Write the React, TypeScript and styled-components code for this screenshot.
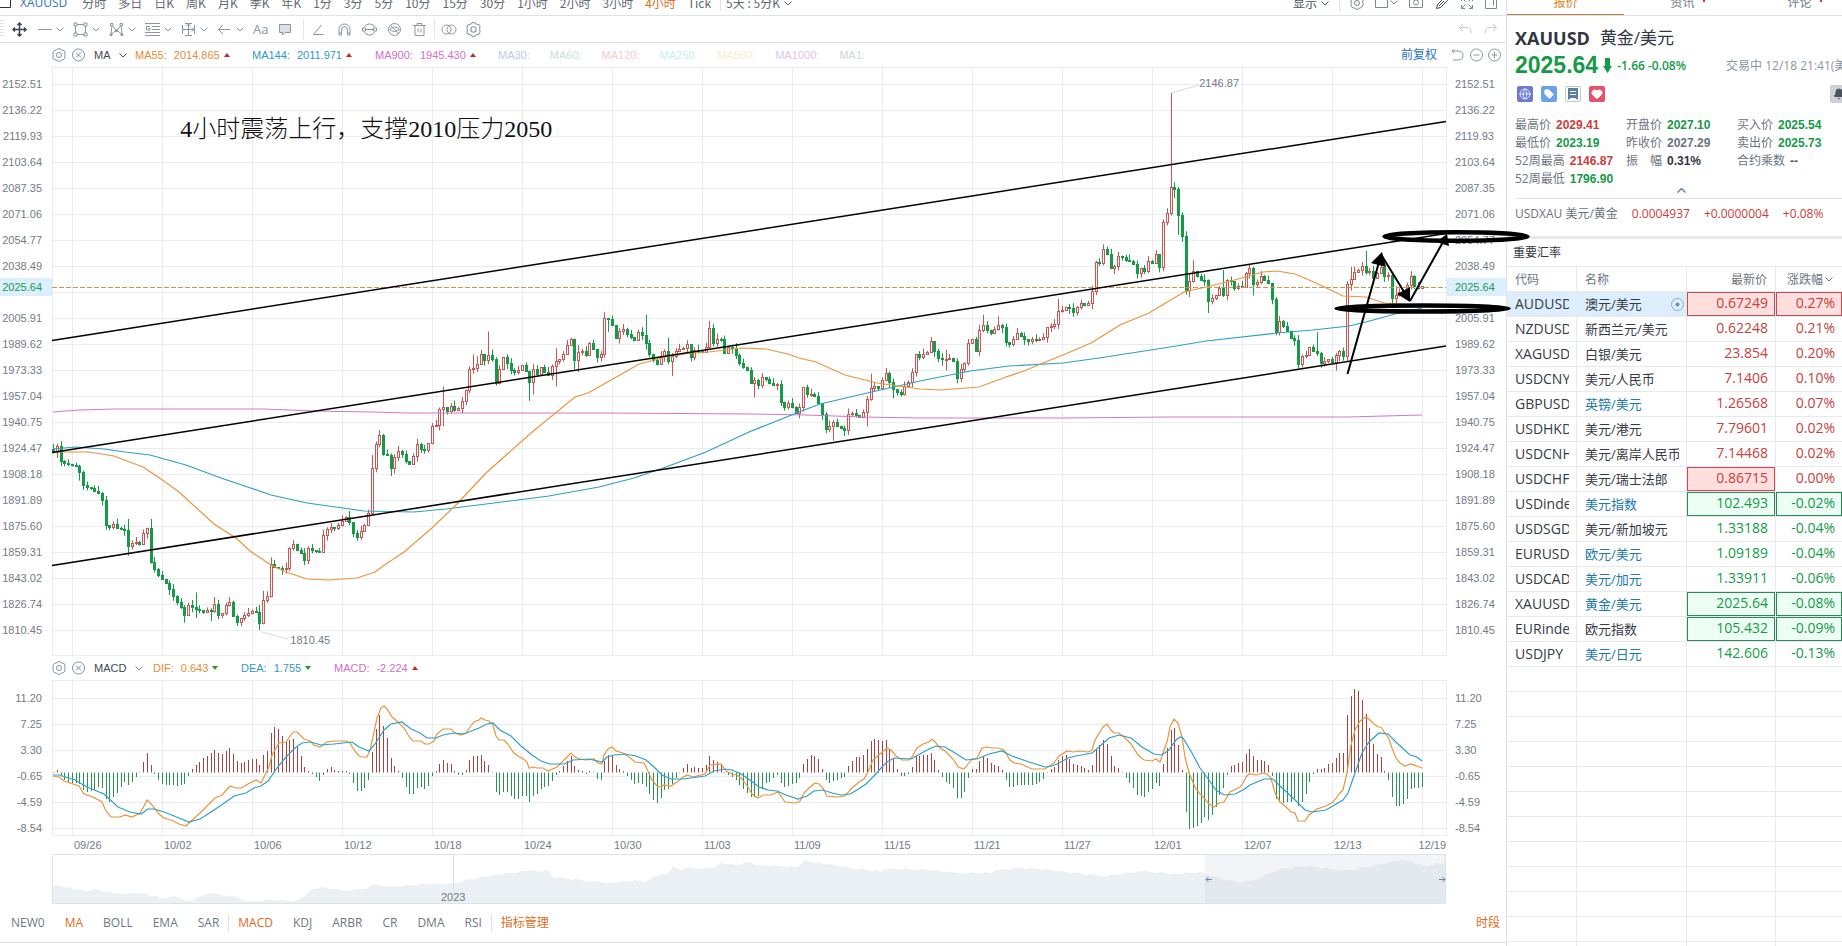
import React from "react";
import styled, { createGlobalStyle } from "styled-components";
import { Globe, Tag, Heart, Bell } from "lucide-react";

const ui = `"Open Sans", "Noto Sans CJK SC", sans-serif`;
const num = `"Liberation Sans", "Noto Sans CJK SC", sans-serif`;
const UP = "#c8403c";
const DOWN = "#159a48";
const GRID = "#e9ecf0";

const Global = createGlobalStyle`
  * { box-sizing: border-box; }
  body { margin: 0; background: #fff; font-family: ${ui}; font-size: 12px; color: #6b7480; }
  button { border: 0; background: none; padding: 0; margin: 0; font: inherit; color: inherit; cursor: pointer; }
`;

/* ---------- market data ---------- */

const closes = [
  1921.8, 1925.5, 1916, 1915, 1914.5, 1913.5, 1913, 1909.5, 1901, 1900, 1899.5, 1897.5, 1896, 1892, 1876, 1875, 1877, 1874.5, 1874, 1873,
  1863, 1865, 1865.5, 1864, 1871, 1874.5, 1853, 1848.5, 1845, 1842.5, 1840, 1836, 1831.5, 1828, 1825, 1820, 1826, 1825, 1823.5, 1823,
  1822, 1823, 1822.5, 1827, 1820, 1821, 1826, 1828, 1819.5, 1815.5, 1818, 1820, 1821, 1822.5, 1821.5, 1814.5, 1829.5, 1831.5, 1852, 1850,
  1849, 1848.5, 1849.5, 1861.5, 1864.5, 1860.5, 1858.5, 1854.5, 1862, 1860.5, 1860, 1859.5, 1870, 1874, 1875, 1874.5, 1876, 1879, 1881, 1878,
  1871.5, 1868.5, 1872.5, 1876, 1883.5, 1912, 1927, 1932.5, 1921, 1920, 1912, 1919, 1922.5, 1920.5, 1916, 1914.5, 1919.5, 1927, 1924, 1923,
  1927.5, 1938.5, 1939, 1949, 1950, 1947.5, 1951, 1948, 1949.5, 1954, 1961, 1974, 1974.5, 1977, 1983.5, 1979.5, 1983, 1980.5, 1965, 1974,
  1981.5, 1977.5, 1973.5, 1972, 1973.5, 1976.5, 1973, 1966, 1974, 1971, 1975, 1972, 1970.5, 1976, 1979, 1980, 1983.5, 1989, 1992.5, 1979.5,
  1984.5, 1985, 1983, 1990, 1986.5, 1981.5, 1983.5, 2006, 2005, 2001.5, 1993.5, 1998, 1999, 1996, 1994, 1992, 1997, 1995.5, 1990, 1983.5,
  1979.5, 1977, 1982, 1985.5, 1979, 1982, 1985.5, 1986.5, 1987, 1989.5, 1981.5, 1986, 1985, 1984.5, 1988, 1999.5, 1990, 1993, 1992.5, 1984,
  1987.5, 1987, 1983, 1978, 1975.5, 1973.5, 1965, 1967, 1964, 1969, 1967.5, 1965, 1964, 1964.5, 1953.5, 1950, 1952.5, 1950, 1946.5, 1950,
  1962.5, 1958, 1958.5, 1957, 1952.5, 1945.5, 1936.5, 1938.5, 1940.5, 1938.5, 1937, 1935.5, 1946, 1946.5, 1945, 1944, 1947, 1955, 1962, 1963,
  1962, 1967, 1971.5, 1965.5, 1961.5, 1959.5, 1958, 1963, 1966, 1972, 1983.5, 1981.5, 1983.5, 1984.5, 1991.5, 1985, 1981, 1980, 1980.5, 1981,
  1979, 1968.5, 1974, 1977.5, 1990.5, 1992.5, 1985.5, 1998.5, 2001.5, 1998.5, 1996.5, 1999, 2001.5, 2000, 1991, 1989.5, 1993, 1996.5, 1994.5, 1992.5,
  1991.5, 1992.5, 1992, 1993, 1994, 2000, 2001, 2002, 2010, 2011, 2013, 2012, 2009.5, 2012.5, 2015, 2014, 2015, 2023, 2041, 2040.5,
  2049, 2046, 2037, 2038.5, 2045, 2044, 2042.5, 2041.5, 2039.5, 2034, 2037.5, 2035.5, 2041.5, 2040.5, 2046, 2038, 2066, 2071.5, 2088, 2087,
  2070.5, 2057, 2023.5, 2029, 2035.5, 2032, 2030, 2029.5, 2016.5, 2018.5, 2020.5, 2024.5, 2020.5, 2029.5, 2029, 2025, 2026, 2025.5, 2034, 2037,
  2027, 2028.5, 2032, 2030, 2028, 2018, 1997, 2004, 2001, 1998, 1993.5, 1992, 1977, 1982, 1983, 1987.5, 1985.5, 1984, 1977.5, 1979,
  1980, 1978.5, 1982.5, 1985, 1982, 2027, 2030.5, 2035, 2036, 2038.5, 2035, 2035.5, 2031, 2034, 2038, 2032, 2033, 2018.5, 2020, 2022,
  2023.5, 2026.5, 2032, 2026, 2025, 2025.64,
];

/* index -> [high, low] where the session moved far beyond its body */
const extremes: Record<number, [number, number]> = {
  0: [1927, 1921], 7: [1914, 1904], 20: [1880, 1857], 26: [1880, 1852], 35: [1826, 1815], 38: [1834, 1818], 42: [1824, 1816],
  43: [1831, 1821], 49: [1820, 1813], 55: [1826, 1810.45], 56: [1835, 1814], 58: [1856, 1831], 79: [1885, 1876],
  85: [1920, 1883], 90: [1921, 1907], 104: [1963, 1938], 112: [1983, 1971], 113: [1982, 1972], 116: [1997.5, 1977],
  127: [1973, 1954], 128: [1977, 1958], 134: [1987, 1963], 139: [1993, 1974], 140: [1989, 1972], 147: [2009.5, 1981],
  148: [2006, 1997], 158: [2008, 1986], 164: [1993.5, 1977], 165: [1984, 1969.5], 175: [2004, 1987], 176: [2002, 1988],
  187: [1969, 1956], 208: [1942, 1929], 217: [1957, 1938], 218: [1971, 1954], 224: [1968, 1955.5], 237: [1984, 1976], 238: [1986, 1973],
  248: [2008, 1997], 252: [2007, 1998], 268: [2018, 1999], 280: [2052, 2039], 298: [2146.87, 2070], 299: [2091, 2081],
  300: [2088, 2058], 303: [2034, 2019], 304: [2042, 2028], 308: [2030, 2009], 312: [2036, 2019], 320: [2038, 2020],
  326: [2019, 1995], 337: [1997, 1982], 342: [1984, 1973], 345: [2029, 1979], 346: [2038, 2023], 350: [2048, 2033],
  357: [2034, 2014], 358: [2026, 2013],
};

const barX = (i: number) => Math.round(53 + i * 3.75) + 0.5;
const priceY = (p: number) => 84 + (2152.51 - p) * 1.5961;

const candles = closes.map((close, i) => {
  const open = i ? closes[i - 1] : 1924;
  const hi = Math.max(open, close) + ((i * 7) % 5) * 0.8;
  const lo = Math.min(open, close) - ((i * 11) % 6) * 0.7;
  const [high, low] = extremes[i] ?? [hi, lo];
  return { open, close, high, low };
});

/* MACD histogram, one value per session, in twentieths of a point */
const histogram = [
  0, 7, -8, -23, -27, -30, -31, -33, -53, -58, -55, -53, -43, -46, -78, -88, -73, -62, -43, -28,
  -36, -28, -13, 2, 32, 60, 22, -5, -23, -33, -37, -38, -38, -41, -38, -35, -9, 10, 24, 33,
  43, 51, 58, 69, 60, 57, 66, 75, 57, 35, 30, 33, 37, 42, 42, 22, 52, 65, 120, 138,
  131, 111, 95, 99, 101, 77, 49, 17, 5, -4, -13, -25, -7, 10, 16, 9, 5, 5, 6, -3,
  -31, -56, -56, -46, -23, 62, 132, 172, 141, 103, 45, 20, 5, -16, -43, -65, -65, -46, -44, -50,
  -40, -10, 5, 27, 39, 30, 25, 5, -8, -7, 7, 37, 49, 49, 54, 36, 22, 0, -58, -67,
  -57, -58, -70, -80, -79, -70, -71, -89, -70, -63, -48, -42, -41, -25, -8, 5, 19, 35, 49, 19,
  9, 5, -5, 6, 0, -20, -23, 34, 54, 51, 22, 12, 5, -11, -21, -35, -30, -33, -44, -65,
  -83, -92, -76, -53, -50, -35, -17, 0, 13, 27, 13, 17, 13, 14, 22, 51, 39, 33, 27, 0,
  -8, -13, -23, -38, -49, -60, -74, -73, -71, -48, -32, -27, -17, -7, -31, -43, -39, -34, -32, -17,
  27, 42, 54, 51, 42, 12, -23, -32, -25, -22, -16, -13, 19, 35, 46, 46, 52, 72, 95, 102,
  98, 95, 97, 71, 42, 12, -11, -11, -5, 17, 49, 49, 54, 52, 58, 37, 9, -13, -28, -34,
  -47, -76, -76, -59, -17, 10, 12, 36, 50, 45, 30, 24, 20, 9, -23, -44, -44, -38, -38, -38,
  -38, -38, -35, -29, -20, 0, 12, 17, 39, 49, 52, 42, 27, 24, 21, 15, 9, 22, 70, 82,
  99, 87, 49, 19, 15, 0, -17, -31, -46, -68, -70, -74, -59, -48, -31, -40, 27, 73, 127, 135,
  84, 9, -119, -169, -166, -160, -151, -133, -142, -127, -103, -67, -46, -8, 21, 24, 29, 33, 55, 70,
  51, 39, 39, 34, 24, -11, -80, -89, -92, -89, -89, -77, -100, -89, -64, -28, -5, 12, 10, 15,
  25, 30, 45, 60, 60, 174, 231, 252, 244, 219, 177, 134, 87, 55, 46, 6, -22, -74, -100, -100,
  -94, -79, -49, -46, -46, -44,
];

const dif =
  "53,776 59,777 64,781 79,786 84,794 93,797 102,802 106,811 111,817 120,817 125,815 132,817 140,813 144,806 147,800 152,805 159,814 164,818 171,820 179,824 186,826 191,821 200,813 207,806 215,798 222,795 230,786 236,788 241,788 248,784 256,780 261,783 264,777 269,767 272,755 279,743 286,742 293,732 297,732 304,739 310,741 314,745 320,747 327,742 334,741 346,741 350,743 354,750 359,756 362,757 367,757 370,750 373,737 377,718 381,708 384,706 387,709 392,717 398,722 404,728 410,738 413,741 421,741 425,744 429,744 434,741 437,734 443,729 451,729 455,733 461,735 466,733 470,727 474,722 479,720 481,718 485,720 489,721 493,725 496,736 499,740 504,740 507,743 514,753 518,756 522,758 527,762 529,768 534,767 537,768 543,768 548,771 557,767 566,758 571,753 575,757 580,759 586,760 594,759 598,763 602,764 604,755 608,749 612,747 616,751 623,753 629,757 635,762 644,763 647,769 652,780 657,786 661,787 664,785 671,786 677,782 682,778 687,775 693,777 705,774 710,765 721,764 726,771 732,774 737,775 741,778 746,784 752,794 758,798 763,795 771,795 778,792 785,802 796,803 800,801 804,793 809,788 815,783 819,784 823,788 827,796 837,797 845,796 852,788 859,782 864,779 868,772 873,760 880,754 887,748 891,750 896,756 902,760 909,760 912,757 917,748 923,744 929,742 932,739 936,743 939,747 945,751 949,755 954,760 958,767 964,769 968,764 972,759 977,758 982,748 987,747 992,748 998,748 1004,750 1010,760 1014,763 1021,764 1032,769 1045,769 1054,763 1059,756 1067,751 1073,752 1080,751 1088,752 1092,750 1095,740 1103,727 1107,724 1111,730 1114,733 1119,733 1125,738 1131,744 1138,755 1144,760 1152,761 1156,759 1160,762 1163,753 1167,742 1170,727 1174,719 1178,723 1182,737 1185,757 1189,773 1195,787 1200,794 1205,799 1209,804 1214,807 1219,803 1224,802 1230,792 1240,787 1243,783 1246,777 1249,774 1257,775 1262,773 1267,774 1271,778 1275,793 1280,802 1286,807 1291,812 1295,813 1298,821 1305,821 1309,815 1317,809 1326,806 1333,802 1340,793 1343,790 1347,773 1351,745 1355,730 1360,721 1366,717 1369,719 1374,724 1378,727 1381,727 1385,733 1389,739 1392,748 1396,758 1400,763 1405,766 1411,764 1422,768";
const dea =
  "53,775 59,775 75,780 87,787 104,794 118,807 130,812 141,814 148,809 154,809 164,812 179,818 189,822 200,819 211,812 223,804 234,796 246,793 254,788 261,786 268,781 277,768 286,757 295,748 302,743 311,742 321,745 334,744 352,742 359,747 369,751 375,744 384,730 391,724 402,722 411,729 420,733 427,738 436,738 443,735 454,733 464,734 479,728 487,724 493,723 500,730 511,736 521,746 532,755 541,761 550,764 564,764 573,760 589,759 602,762 607,757 614,755 625,754 636,756 646,760 654,767 662,775 671,779 684,779 705,776 714,771 725,769 732,770 741,774 750,780 759,787 768,790 777,791 786,795 798,799 807,796 814,791 823,790 832,793 841,795 850,794 857,790 866,784 873,777 882,767 887,762 894,758 911,759 920,754 929,749 936,746 945,747 955,753 966,760 977,759 989,754 1002,751 1012,756 1029,762 1045,767 1052,766 1057,764 1068,758 1076,756 1092,753 1099,747 1109,738 1119,735 1131,738 1142,747 1154,754 1162,755 1169,750 1176,740 1180,737 1183,738 1192,753 1200,768 1209,780 1216,790 1224,795 1235,794 1243,790 1250,785 1264,779 1273,779 1280,786 1293,798 1305,810 1312,812 1326,810 1343,800 1348,793 1355,773 1362,753 1369,742 1379,733 1388,734 1398,744 1410,755 1417,757 1422,761";

const ma55 =
  "53,452 89,452 114,456 143,467 161,479 179,492 214,524 236,538 250,551 271,565 286,572 307,579 329,580 357,578 375,572 386,564 404,552 432,528 457,504 486,473 531,433 575,397 588,393 620,375 639,364 666,357 691,353 709,352 741,348 766,349 788,354 799,358 816,362 845,375 877,383 920,389 941,390 979,387 1006,377 1024,371 1043,363 1063,355 1091,343 1120,325 1149,313 1184,292 1206,287 1231,281 1263,272 1277,271 1295,274 1316,283 1343,296 1366,297 1384,303 1422,305";
const ma144 =
  "53,449 75,447 104,449 125,452 150,455 186,465 221,478 271,495 307,503 343,508 364,511 414,512 446,509 486,504 518,500 549,496 599,487 634,478 666,467 706,452 749,432 799,412 820,404 863,394 920,381 970,371 1009,366 1063,363 1099,358 1170,347 1206,341 1277,333 1313,330 1349,326 1366,322 1395,314 1422,308";
const ma900 =
  "53,412 80,410 114,409 264,409 314,411 371,412 407,413 609,413 752,414 806,415 863,417 920,418 1063,418 1170,417 1302,417 1349,417 1384,416 1422,415";

const history: [number, number][] = [
  [52, 886], [61, 886], [71, 888], [86, 891], [96, 889], [107, 892], [118, 894], [143, 893], [161, 898], [175, 897], [189, 901], [200, 897],
  [209, 893], [221, 895], [232, 896], [250, 902], [268, 900], [296, 901], [304, 896], [314, 888], [329, 888], [343, 891], [364, 889], [375, 885],
  [393, 887], [411, 885], [429, 884], [450, 884], [468, 880], [493, 875], [511, 873], [527, 871], [548, 871], [554, 877], [589, 881], [611, 883],
  [637, 880], [645, 883], [654, 876], [668, 874], [673, 867], [682, 870], [691, 867], [700, 869], [714, 867], [721, 863], [736, 865], [747, 862],
  [757, 865], [796, 867], [805, 861], [821, 863], [839, 866], [857, 869], [879, 871], [893, 869], [929, 870], [961, 873], [989, 873], [1000, 870],
  [1018, 868], [1042, 869], [1066, 872], [1104, 876], [1142, 871], [1173, 874], [1200, 872], [1218, 878], [1242, 883], [1259, 878], [1280, 869],
  [1307, 866], [1345, 871], [1369, 867], [1390, 862], [1404, 859], [1414, 863], [1428, 867], [1436, 863], [1446, 863],
];

const historyOutline = (() => {
  const pts: string[] = [];
  for (let k = 0; k < history.length - 1; k++) {
    const [x0, y0] = history[k];
    const [x1, y1] = history[k + 1];
    for (let x = x0; x < x1; x += 3) {
      const y = y0 + ((y1 - y0) * (x - x0)) / (x1 - x0) + (((x * 7) % 5) - 2) * 0.4;
      pts.push(`${x},${y.toFixed(1)}`);
    }
  }
  return `52,904 ${pts.join(" ")} 1446,863 1446,904`;
})();

const priceTicks = [
  "2152.51", "2136.22", "2119.93", "2103.64", "2087.35", "2071.06", "2054.77", "2038.49", "", "2005.91", "1989.62",
  "1973.33", "1957.04", "1940.75", "1924.47", "1908.18", "1891.89", "1875.60", "1859.31", "1843.02", "1826.74", "1810.45",
];
const macdTicks = ["11.20", "7.25", "3.30", "-0.65", "-4.59", "-8.54"];
const dates = [
  "09/26", "10/02", "10/06", "10/12", "10/18", "10/24", "10/30", "11/03", "11/09", "11/15", "11/21", "11/27", "12/01", "12/07", "12/13", "12/19",
];
const columns = dates.map((_, i) => 72.5 + i * 90);

type Box = "none" | "price" | "both";
const quotes: [string, string, string, string, boolean, Box][] = [
  ["AUDUSD", "澳元/美元", "0.67249", "0.27%", false, "both"],
  ["NZDUSD", "新西兰元/美元", "0.62248", "0.21%", false, "none"],
  ["XAGUSD", "白银/美元", "23.854", "0.20%", false, "none"],
  ["USDCNY", "美元/人民币", "7.1406", "0.10%", false, "none"],
  ["GBPUSD", "英镑/美元", "1.26568", "0.07%", true, "none"],
  ["USDHKD", "美元/港元", "7.79601", "0.02%", false, "none"],
  ["USDCNH", "美元/离岸人民币", "7.14468", "0.02%", false, "none"],
  ["USDCHF", "美元/瑞士法郎", "0.86715", "0.00%", false, "price"],
  ["USDindex", "美元指数", "102.493", "-0.02%", true, "both"],
  ["USDSGD", "美元/新加坡元", "1.33188", "-0.04%", false, "none"],
  ["EURUSD", "欧元/美元", "1.09189", "-0.04%", true, "none"],
  ["USDCAD", "美元/加元", "1.33911", "-0.06%", true, "none"],
  ["XAUUSD", "黄金/美元", "2025.64", "-0.08%", true, "both"],
  ["EURindex", "欧元指数", "105.432", "-0.09%", false, "both"],
  ["USDJPY", "美元/日元", "142.606", "-0.13%", true, "none"],
];

/* ---------- layout ---------- */

const Page = styled.div`
  display: flex;
  height: 100vh;
  overflow: hidden;
`;
const ChartPanel = styled.main`
  flex: 1;
  min-width: 0;
  display: flex;
  flex-direction: column;
`;
const PeriodBar = styled.nav`
  display: flex;
  align-items: flex-end;
  height: 16px;
  padding: 0 8px 4px 0;
  gap: 12px;
  overflow: hidden;
  border-bottom: 1px solid #dfe2e7;
  font-family: "Noto Sans CJK SC", sans-serif;
  white-space: nowrap;
`;
const SymbolGroup = styled.div`
  display: flex;
  align-items: center;
  gap: 8px;
  margin-right: 3px;
`;
const RangeGroup = styled(SymbolGroup)`
  gap: 5px;
  margin-left: -3px;
`;
const PeriodButton = styled.button<{ $tone?: string }>`
  display: flex;
  align-items: center;
  gap: 4px;
  height: 16px;
  line-height: 16px;
  color: ${(p) => p.$tone ?? "#5f6873"};
`;
const SymbolButton = styled(PeriodButton)`
  font-family: ${ui};
`;
const Spacer = styled.div`
  flex: 1;
`;
const BarDivider = styled.span`
  width: 1px;
  height: 16px;
  background: #dfe3e8;
`;
const PeriodTools = styled.div`
  display: flex;
  align-items: center;
  gap: 10px;
  height: 16px;
  color: #7d8690;
`;
const ToolBar = styled.div`
  display: flex;
  align-items: center;
  height: 27px;
  padding: 0 3px 0 0;
  border-bottom: 1px solid #dfe2e7;
  color: #8c96a3;
`;
const Grip = styled.span`
  width: 4px;
  height: 18px;
  margin-right: 8px;
  background: repeating-linear-gradient(#dde1e6 0 1px, #fff 1px 3px);
`;
const ToolButton = styled.button<{ $wide?: boolean; $dark?: boolean; $centered?: boolean }>`
  display: flex;
  align-items: center;
  justify-content: ${(p) => (p.$centered ? "center" : "flex-start")};
  gap: ${(p) => (p.$wide ? 4 : 0)}px;
  width: ${(p) => (p.$wide ? 36 : 25)}px;
  height: 20px;
  color: ${(p) => (p.$dark ? "#3a4350" : "inherit")};
  font-size: 13px;
`;
const ToolDivider = styled.span<{ $tight?: boolean }>`
  width: 1px;
  height: 20px;
  margin-right: ${(p) => (p.$tight ? 6 : 8)}px;
  margin-left: ${(p) => (p.$tight ? -3 : 0)}px;
  background: #e3e6ea;
`;
const Legend = styled.div`
  display: flex;
  align-items: center;
  height: 24px;
  padding: 0 4px 0 52px;
  font: 11px/24px ${num};
  white-space: nowrap;
`;
const LegendHead = styled.div`
  display: flex;
  align-items: center;
  gap: 8px;
  width: 83px;
  color: #414954;
`;
const LegendIcons = styled.div`
  display: flex;
  align-items: center;
  gap: 5px;
  color: #7b90aa;
`;
const Series = styled.span<{ $color: string; $w?: number }>`
  display: flex;
  align-items: center;
  gap: 7px;
  color: ${(p) => p.$color};
  min-width: ${(p) => p.$w ?? 0}px;
  padding-right: ${(p) => (p.$w ? 0 : 20)}px;
`;
const Mark = styled.i<{ $down?: boolean }>`
  margin-left: -3px;
  border: 3px solid transparent;
  border-top: ${(p) => (p.$down ? "4px solid #2b9a1a" : "0")};
  border-bottom: ${(p) => (p.$down ? "0" : "4px solid #c02a26")};
`;
const LegendTools = styled.div`
  display: flex;
  align-items: center;
  gap: 3px;
  color: #8c96a3;
`;
const AdjustLink = styled.a`
  margin-right: 10px;
  color: #2a6fc4;
  font: 12px/24px ${ui};
  text-decoration: none;
`;
const PlotRow = styled.div`
  display: grid;
  grid-template-columns: 52px 1fr 60px;
`;
const Axis = styled.div<{ $right?: boolean; $top: number; $height: number }>`
  position: relative;
  display: flex;
  flex-direction: column;
  height: ${(p) => p.$height}px;
  padding-top: ${(p) => p.$top}px;
  padding-left: ${(p) => (p.$right ? 9 : 0)}px;
  padding-right: ${(p) => (p.$right ? 0 : 10)}px;
  text-align: ${(p) => (p.$right ? "left" : "right")};
  font: 11px/26px ${num};
  color: #727b87;
`;
const Tick = styled.span`
  flex: 0 0 26px;
`;
const PriceTag = styled.span<{ $right?: boolean }>`
  position: absolute;
  left: 0;
  right: 0;
  top: 211px;
  height: 18px;
  padding: ${(p) => (p.$right ? "0 0 0 9px" : "0 10px 0 0")};
  background: #dceffc;
  color: #239a55;
  line-height: 18px;
`;
const Plot = styled.div`
  position: relative;
  min-width: 0;
`;
const Svg = styled.svg`
  display: block;
  width: 100%;
  overflow: visible;
`;
const Markup = styled(Svg)`
  position: absolute;
  inset: 0;
  z-index: 3;
  pointer-events: none;
`;
const Note = styled.span<{ $x: number; $y: number }>`
  position: absolute;
  left: ${(p) => p.$x}%;
  top: ${(p) => p.$y}px;
  font: 11px/14px ${num};
  color: #727b87;
`;
const Headline = styled(Note)`
  font: 24px/32px "Liberation Serif", "Noto Sans CJK SC", serif;
  font-weight: 300;
  color: #111;
  white-space: nowrap;
`;
const DateRow = styled.div`
  display: grid;
  grid-template-columns: minmax(0, 22fr) repeat(15, minmax(0, 90fr)) minmax(0, 22fr);
  height: 18px;
  margin: 0 60px 0 52px;
  font: 11px/18px ${num};
  color: #727b87;
  span:last-child { justify-self: end; }
`;
const IndicatorBar = styled.nav`
  display: flex;
  align-items: center;
  gap: 20px;
  height: 39px;
  padding: 0 6px 0 11px;
  border-bottom: 1px solid #dfe2e7;
`;
const Indicator = styled.button<{ $on?: boolean }>`
  line-height: 20px;
  color: ${(p) => (p.$on ? "#e06c1c" : "#6f7985")};
`;
const IndicatorDivider = styled.span`
  width: 1px;
  height: 18px;
  margin: 0 -11px;
  background: #dfe3e8;
`;

const Sidebar = styled.aside`
  flex: 0 0 336px;
  overflow: hidden;
  border-left: 1px solid #dfe2e7;
`;
const SideTabs = styled.nav`
  display: flex;
  width: 351px;
  height: 16px;
  overflow: hidden;
  border-bottom: 1px solid #dfe2e7;
`;
const SideTab = styled.button<{ $on?: boolean }>`
  display: flex;
  align-items: flex-end;
  justify-content: center;
  width: 117px;
  height: 16px;
  padding-bottom: ${(p) => (p.$on ? 3 : 5)}px;
  line-height: 16px;
  color: ${(p) => (p.$on ? "#d98324" : "#6f7985")};
  border-bottom: ${(p) => (p.$on ? "2px solid #c9803a" : "0")};
`;
const Dot = styled.i`
  align-self: flex-start;
  width: 2px;
  height: 2px;
  margin: 0 -10px 0 8px;
  background: #d43c3c;
`;
const Quote = styled.section`
  position: relative;
  width: 351px;
  padding: 9px 0 0 8px;
  white-space: nowrap;
`;
const Title = styled.h1`
  display: flex;
  gap: 10px;
  margin: 0;
  height: 27px;
  font: 700 18px/26px ${ui};
  color: #2f3742;
`;
const TitleName = styled.span`
  font-size: 17px;
  font-weight: 400;
`;
const PriceLine = styled.div`
  display: flex;
  align-items: center;
  gap: 5px;
  height: 26px;
  color: ${DOWN};
  font-weight: 600;
`;
const DownArrow = styled.svg`
  flex: none;
`;
const BigPrice = styled.strong`
  font: 700 23px/26px ${num};
`;
const Session = styled.span`
  margin-left: 35px;
  color: #8b95a1;
  font-weight: 400;
`;
const Badges = styled.div`
  display: flex;
  gap: 8px;
  padding: 8px 0 0 2px;
  height: 38px;
`;
const Badge = styled.button<{ $bg: string; $fg?: string; $line?: string }>`
  display: flex;
  align-items: center;
  justify-content: center;
  width: 16px;
  height: 16px;
  border: 1px solid ${(p) => p.$line ?? p.$bg};
  border-radius: 2px;
  background: ${(p) => p.$bg};
  color: ${(p) => p.$fg ?? "#fff"};
`;
const AlarmButton = styled(Badge)`
  position: absolute;
  right: 10px;
  top: 69px;
  width: 18px;
  height: 18px;
`;
const Stats = styled.dl`
  display: grid;
  grid-template-columns: 111px 111px 1fr;
  grid-auto-rows: 18px;
  margin: 0;
`;
const Stat = styled.div`
  display: flex;
  gap: 5px;
  line-height: 18px;
`;
const StatLabel = styled.dt`
  white-space: pre;
`;
const StatValue = styled.dd<{ $tone: string }>`
  margin: 0;
  font: 700 12px/18px ${num};
  color: ${(p) => p.$tone};
`;
const Collapse = styled.button`
  display: flex;
  justify-content: center;
  width: 332px;
  height: 11px;
  color: #6b87a5;
  border-bottom: 1px solid #dfe2e7;
`;
const Inverse = styled.div`
  display: flex;
  gap: 14px;
  height: 37px;
  line-height: 30px;
  color: ${UP};
`;
const InverseName = styled.span`
  color: #6b7480;
`;
const GroupTitle = styled.h2`
  margin: 0;
  height: 30px;
  padding-left: 6px;
  border-top: 3px solid #e6e9ee;
  font: 400 12px/28px ${ui};
  color: #2f3742;
`;
const Table = styled.table`
  width: 336px;
  table-layout: fixed;
  border-collapse: separate;
  border-spacing: 0;
  border-top: 1px solid #e3e6ea;
`;
const Th = styled.th<{ $end?: boolean }>`
  height: 25px;
  padding: 0 8px;
  border-right: 1px solid #e6e9ee;
  border-bottom: 1px solid #e6e9ee;
  text-align: ${(p) => (p.$end ? "right" : "left")};
  font-weight: 400;
  white-space: nowrap;
`;
const SortButton = styled.button`
  display: flex;
  align-items: center;
  gap: 2px;
  margin-left: 3px;
`;
const Row = styled.tr<{ $active?: boolean }>`
  background: ${(p) => (p.$active ? "#deedfb" : "#fff")};
`;
const Td = styled.td`
  height: 25px;
  padding: 0 7px 0 8px;
  overflow: hidden;
  border-right: 1px solid #e6e9ee;
  border-bottom: 1px solid #e6e9ee;
  color: #3b4450;
  font-size: 14px;
  line-height: 24px;
  white-space: nowrap;
`;
const NameTd = styled(Td)`
  padding-right: 2px;
  font-size: 13px;
`;
const Clip = styled.div<{ $link?: boolean; $w?: number }>`
  display: flex;
  align-items: center;
  justify-content: space-between;
  width: ${(p) => (p.$w ? `${p.$w}px` : "auto")};
  overflow: hidden;
  color: ${(p) => (p.$link ? "#2077ad" : "#333b46")};
`;
const ValueTd = styled(Td)<{ $down: boolean; $boxed: boolean }>`
  line-height: 22px;
  padding-bottom: 2px;
  text-align: right;
  color: ${(p) => (p.$down ? DOWN : UP)};
  background: ${(p) => (p.$boxed ? (p.$down ? "#edfff4" : "#ffdede") : "#fff")};
  box-shadow: ${(p) => (p.$boxed ? `inset 0 0 0 1px ${p.$down ? "#2a8a57" : "#c44c50"}` : "none")};
`;

/* ---------- icons ---------- */

type IconProps = { w?: number; h?: number; children: React.ReactNode };
const Icon = ({ w = 15, h = 15, children }: IconProps) => (
  <svg width={w} height={h} viewBox={`0 0 ${w} ${h}`} fill="none" stroke="currentColor" strokeWidth="1" aria-hidden="true">
    {children}
  </svg>
);
const Chevron = () => (
  <Icon w={8} h={5}>
    <path d="M.5.5 4 4 7.5.5" />
  </Icon>
);
const Gear = ({ size = 14 }: { size?: number }) => (
  <svg width={size} height={size} viewBox="0 0 14 14" fill="none" stroke="currentColor" aria-hidden="true">
    <path d="M5.200 1.300Q7-.3 8.800 1.300 9.800 2.400 11.200 2.300 13.400 2.700 13 4.900 12.400 6.200 13 7.800 13.500 11 11.200 11.700 9.800 11.600 8.800 12.700 7 14.300 5.200 12.700 4.200 11.600 2.800 11.700.6 11 1 9.100 1.600 7.500 1 6.200.5 3 2.800 2.300 4.200 2.400 5.200 1.300Z" />
    <circle cx="7" cy="7" r="2.500" />
  </svg>
);
const CircleMark = ({ d }: { d: string }) => (
  <Icon w={15} h={14}>
    <circle cx="7.500" cy="7" r="6" />
    <path d={d} />
  </Icon>
);

const tools: { label: string; menu?: boolean; dark?: boolean; art: React.ReactNode }[] = [
  {
    label: "移动", dark: true,
    art: <Icon><path strokeWidth="1.500" d="M7.500 1v13M1 7.500h13M5.500 3l2-2 2 2M5.500 12l2 2 2-2M3 5.500l-2 2 2 2M12 5.500l2 2-2 2" /></Icon>,
  },
  { label: "直线", menu: true, art: <Icon><path d="M1 7.500h14" /></Icon> },
  { label: "矩形", menu: true, art: <Icon><path d="M4 2.500h7M12.500 4v7M11 12.500H4M2.500 11V4M1 1h3v3H1zM11 11h3v3h-3zM1 11h3v3H1zM11 1h3v3h-3z" /></Icon> },
  { label: "形态", menu: true, art: <Icon><path d="M2 12.500 3 3l4.500 6L12 3l1 9.500L7.500 8zM1.500 1.500h2.500v2H1.500zM11 1.500h2.500v2H11zM1 12h2v1.500H1zM12 12h2v1.500h-2zM6.500 8h2v1.500h-2z" /></Icon> },
  { label: "斐波那契", menu: true, art: <Icon><path d="M0 1.500h15M0 13.500h15M7 4.500h8M7 7.500h8M0 10.500h15M5 4.500H1.500v3.500H5V6.500H3.500" /></Icon> },
  { label: "测量", menu: true, art: <Icon><path d="M1.500 3v9M13.500 3v9M1.500 7.500h12M7.500 1v13M4 1.500h7M4 13.500h7M5.500 4l2-2 2 2M11 5.500l2 2-2 2" /></Icon> },
  { label: "箭头", menu: true, art: <Icon><path d="M1.500 7.500h12M6 3 1.500 7.500 6 12" /></Icon> },
  { label: "文字", art: <span>Aa</span> },
  { label: "批注", art: <Icon><path fill="#dde1e6" d="M1.500 2.500h11v8H7l-2.500 2.500v-2.500h-3z" /></Icon> },
];
const tools2: { label: string; art: React.ReactNode }[] = [
  { label: "角度", art: <Icon><path d="M9.500 3 1.500 12.500h10" /></Icon> },
  { label: "磁吸", art: <Icon><path d="M2 13V7.500a5.500 5.500 0 0 1 11 0V13h-2.500V7.500a3 3 0 0 0-6 0V13zM2 11h2.500M10.500 11H13" /></Icon> },
  { label: "重置", art: <Icon><path d="M2 5.500a6 6 0 0 1 11 0M13 9.500a6 6 0 0 1-11 0M3.500 7.500h8M.5 6h3v3h-3zM11.500 6h3v3h-3z" /></Icon> },
  { label: "隐藏", art: <Icon><circle cx="7.500" cy="7.500" r="6" /><path d="M2.500 7.500q5-5 10 0-5 4-10 0M3 3l9 9" /></Icon> },
  { label: "删除", art: <Icon><path d="M1 3.500h13M5 3.500v-2h5v2M3 3.500v10h9v-10M6 6.500v4M9 6.500v4" /></Icon> },
];

/* ---------- page parts ---------- */

const periods = ["分时", "多日", "日K", "周K", "月K", "季K", "年K", "1分", "3分", "5分", "10分", "15分", "30分", "1小时", "2小时", "3小时"];

const SeriesValue = ({ name, value, color, w, down }: { name: string; value: string; color: string; w: number; down?: boolean }) => (
  <Series $color={color} $w={w}>
    {name} <span>{value}</span>
    <Mark $down={down} />
  </Series>
);

const Candles = () => (
  <g>
    {candles.map((c, i) => {
      const up = c.close > c.open;
      const x = barX(i);
      const top = Math.round(priceY(Math.max(c.open, c.close)));
      const h = Math.max(1, Math.round(priceY(Math.min(c.open, c.close))) - top);
      const color = up ? "#cb5550" : DOWN;
      return (
        <g key={i} stroke={color}>
          <path d={`M${x} ${priceY(c.high).toFixed(1)}V${priceY(c.low).toFixed(1)}`} />
          <rect x={x - 1} y={top + 0.5} width="2" height={h} fill={up ? "#fff" : color} />
        </g>
      );
    })}
  </g>
);

const PricePlot = () => (
  <Plot>
    <Svg height={589} viewBox="52 67 1394 589" preserveAspectRatio="none" fill="none">
      <g stroke={GRID}>
        <path d="M52.500 67.500H1446.500V655.500H52.500Z" />
        {priceTicks.map((_, i) => (
          <path key={i} d={`M52 ${84.5 + i * 26}H1446`} />
        ))}
        {columns.map((x) => (
          <path key={x} d={`M${x} 67V656`} />
        ))}
        <path stroke="#d5dbe2" d="M1171 93 1199 85M262 632 288 639" />
      </g>
      <Candles />
      <polyline points={ma900} stroke="#cf78cb" />
      <polyline points={ma144} stroke="#2f9fc8" strokeWidth="1.200" />
      <polyline points={ma55} stroke="#e8963c" strokeWidth="1.200" />
      <path d="M52 287.500H1446" stroke="#cf9450" strokeDasharray="5 2" />
    </Svg>
    <Note $x={82.3} $y={9}>2146.87</Note>
    <Note $x={17.1} $y={566}>1810.45</Note>
    <Headline $x={9.2} $y={46}>4小时震荡上行，支撑2010压力2050</Headline>
    <Markup height={589} viewBox="52 67 1394 589" preserveAspectRatio="none" fill="none" stroke="#000">
      <path strokeWidth="1.500" d="M52 340.500 1446 121.500M52 452.500 1446 233.500M52 565.500 1446 346" />
      <path strokeWidth="2" d="M1347.500 374 1379 262M1382 256 1406 295M1410 301 1443 242" />
      <path fill="#000" stroke="none" d="M1382 252 1386 267 1371 263ZM1410 302 1397 294 1410 287ZM1447 234 1449 246 1436 242Z" />
      <ellipse cx="1456" cy="236.500" rx="71.500" ry="4.200" strokeWidth="4.500" />
      <ellipse cx="1422.500" cy="308.500" rx="86" ry="3" strokeWidth="4.500" />
    </Markup>
  </Plot>
);

const MacdPlot = () => (
  <Plot>
    <Svg height={156} viewBox="52 680 1394 156" preserveAspectRatio="none" fill="none">
      <g stroke={GRID}>
        <path d="M52.500 680.500H1446.500V835.500H52.500Z" />
        {macdTicks.map((_, i) => (
          <path key={i} d={`M52 ${698.5 + i * 26}H1446`} />
        ))}
        {columns.map((x) => (
          <path key={x} d={`M${x} 680V836`} />
        ))}
      </g>
      {histogram.map((v, i) => (
        <path key={i} d={`M${barX(i)} 772.500V${Math.round(772.5 - v / 3)}`} stroke={v > 0 ? "#a8423f" : "#2a9254"} />
      ))}
      <polyline points={dif} stroke="#e8963c" strokeWidth="1.200" />
      <polyline points={dea} stroke="#2f9fc8" strokeWidth="1.200" />
    </Svg>
  </Plot>
);

const Navigator = () => (
  <PlotRow>
    <span />
    <Plot>
      <Svg height={50} viewBox="52 854 1394 50" preserveAspectRatio="none" fill="none">
        <polygon points={historyOutline} fill="#ebf0f4" />
        <rect x="1205" y="854" width="241" height="50" fill="#cdd3e0" fillOpacity="0.240" />
        <path stroke="#dfe3e8" d="M52.500 904V854.500H1446M52 903.500H1446M1445.500 854V904M453.500 854V892" />
        <path stroke="#6f86a8" d="M1212 879.500H1206M1208.500 877 1206 879.500 1208.500 882M1439 879.500H1445M1442.500 877 1445 879.500 1442.500 882" />
      </Svg>
      <Note $x={27.9} $y={36}>2023</Note>
    </Plot>
    <span />
  </PlotRow>
);

const ScaleAxis = ({ ticks, right, top, height, tag }: { ticks: string[]; right?: boolean; top: number; height: number; tag?: boolean }) => (
  <Axis $right={right} $top={top} $height={height}>
    {ticks.map((t, i) => (
      <Tick key={i}>{t}</Tick>
    ))}
    {tag && <PriceTag $right={right}>2025.64</PriceTag>}
  </Axis>
);

const stats: [string, string, string][] = [
  ["最高价", "2029.41", UP], ["开盘价", "2027.10", DOWN], ["买入价", "2025.54", DOWN],
  ["最低价", "2023.19", DOWN], ["昨收价", "2027.29", "#6b7480"], ["卖出价", "2025.73", DOWN],
  ["52周最高", "2146.87", UP], ["振　幅", "0.31%", "#2f3742"], ["合约乘数", "--", "#4b545f"],
  ["52周最低", "1796.90", DOWN],
];

export default function App() {
  return (
    <Page>
      <Global />
      <ChartPanel>
        <PeriodBar>
          <SymbolGroup>
            <Icon w={12} h={16}>
              <path d="M0 12.500h10.500V0" stroke="#333" />
            </Icon>
            <SymbolButton $tone="#2f74c0">XAUUSD</SymbolButton>
          </SymbolGroup>
          {periods.map((p) => (
            <PeriodButton key={p}>{p}</PeriodButton>
          ))}
          <PeriodButton $tone="#e06c1c">4小时</PeriodButton>
          <PeriodButton>Tick</PeriodButton>
          <RangeGroup>
            <BarDivider />
            <PeriodButton>
              5天 : 5分K <Chevron />
            </PeriodButton>
          </RangeGroup>
          <Spacer />
          <PeriodTools>
            <PeriodButton $tone="#4b545f">
              显示 <Chevron />
            </PeriodButton>
            <BarDivider />
            <Gear />
            <Icon w={24} h={14}><path d="M1.500.5h12v11h-12zM16.500 4.500 20 8l3.500-3.500" /></Icon>
            <Icon w={16} h={14}><path d="M1.500 1.500h13v10h-13z" /><circle cx="8" cy="6.500" r="2.500" /></Icon>
            <Icon w={16} h={14}><path stroke="#3a4350" d="M2.500 12.500l1-4 7-7 3 3-7 7zM5 10l5-5" /></Icon>
            <Icon w={14} h={14}><path d="M1.500 9v3.500H5M9 12.500h3.500V9M1.500 5V1.500H5M9 1.500h3.500V5M1.500 12.500l4-4M12.500 12.500l-4-4M1.500 1.500l4 4M12.500 1.500l-4 4" /></Icon>
            <Icon w={14} h={14}><path d="M1.500 1.500h11v11h-11zM9.500 1.500v8" /></Icon>
          </PeriodTools>
        </PeriodBar>

        <ToolBar>
          <Grip />
          {tools.map((t) => (
            <ToolButton key={t.label} aria-label={t.label} $wide={t.menu} $dark={t.dark}>
              {t.art}
              {t.menu && <Chevron />}
            </ToolButton>
          ))}
          <ToolDivider />
          {tools2.map((t) => (
            <ToolButton key={t.label} aria-label={t.label}>{t.art}</ToolButton>
          ))}
          <ToolDivider $tight />
          <ToolButton aria-label="叠加">
            <Icon w={16}><circle cx="5.500" cy="7.500" r="4.500" /><circle cx="10.500" cy="7.500" r="4.500" /></Icon>
          </ToolButton>
          <ToolButton aria-label="设置"><Gear size={15} /></ToolButton>
          <Spacer />
          <ToolButton $centered aria-label="撤销"><Icon><path stroke="#c6ccd3" d="M5 2 1.500 5.500 5 9M1.500 5.500H9q4 0 4 6" /></Icon></ToolButton>
          <ToolButton $centered aria-label="恢复"><Icon><path stroke="#c6ccd3" d="M10 2l3.500 3.500L10 9M13.500 5.500H6q-4 0-4 6" /></Icon></ToolButton>
        </ToolBar>

        <Legend>
          <LegendHead>
            <LegendIcons><Gear /><CircleMark d="M5 4.500l5 5M10 4.500l-5 5" /></LegendIcons>
            MA
            <Chevron />
          </LegendHead>
          <SeriesValue name="MA55:" value="2014.865" color="#e58e33" w={117} />
          <SeriesValue name="MA144:" value="2011.971" color="#2a9bc4" w={123} />
          <SeriesValue name="MA900:" value="1945.430" color="#cf6fca" w={123} />
          <Series $color="#bccbe8">MA30:</Series>
          <Series $color="#c6e6cf">MA60:</Series>
          <Series $color="#f6cccc">MA120:</Series>
          <Series $color="#c2eef5">MA250:</Series>
          <Series $color="#faeccb">MA500:</Series>
          <Series $color="#d9c8ea">MA1000:</Series>
          <Series $color="#d0d4da">MA1:</Series>
          <Spacer />
          <LegendTools>
            <AdjustLink href="#adjust">前复权</AdjustLink>
            <Icon w={16} h={14}><path d="M4.500 1.500 2 3l2 2.500M2.500 3H8q5 0 5 4.500T8 12H3" /></Icon>
            <CircleMark d="M4.500 7h6" />
            <CircleMark d="M4.500 7h6M7.500 4v6" />
          </LegendTools>
        </Legend>

        <PlotRow>
          <ScaleAxis ticks={priceTicks} top={4} height={589} tag />
          <PricePlot />
          <ScaleAxis ticks={priceTicks} top={4} height={589} tag right />
        </PlotRow>

        <Legend>
          <LegendHead>
            <LegendIcons><Gear /><CircleMark d="M5 4.500l5 5M10 4.500l-5 5" /></LegendIcons>
            MACD
          </LegendHead>
          <Series $color="#7b90aa" $w={18}><Chevron /></Series>
          <SeriesValue name="DIF:" value="0.643" color="#e58e33" w={88} down />
          <SeriesValue name="DEA:" value="1.755" color="#2a9bc4" w={93} down />
          <SeriesValue name="MACD:" value="-2.224" color="#cf6fca" w={90} />
        </Legend>

        <PlotRow>
          <ScaleAxis ticks={macdTicks} top={5} height={156} />
          <MacdPlot />
          <ScaleAxis ticks={macdTicks} top={5} height={156} right />
        </PlotRow>

        <DateRow>
          <span />
          {dates.map((d) => (
            <span key={d}>{d}</span>
          ))}
        </DateRow>
        <Navigator />

        <IndicatorBar>
          {["NEW0", "MA", "BOLL", "EMA", "SAR"].map((t) => (
            <Indicator key={t} $on={t === "MA"}>{t}</Indicator>
          ))}
          <IndicatorDivider />
          {["MACD", "KDJ", "ARBR", "CR", "DMA", "RSI"].map((t) => (
            <Indicator key={t} $on={t === "MACD"}>{t}</Indicator>
          ))}
          <IndicatorDivider />
          <Indicator $on>指标管理</Indicator>
          <Spacer />
          <Indicator $on>时段</Indicator>
        </IndicatorBar>
      </ChartPanel>

      <Sidebar>
        <SideTabs>
          <SideTab $on>报价</SideTab>
          <SideTab>资讯<Dot /></SideTab>
          <SideTab>评论<Dot /></SideTab>
        </SideTabs>
        <Quote>
          <Title>
            XAUUSD <TitleName>黄金/美元</TitleName>
          </Title>
          <PriceLine>
            <BigPrice>2025.64</BigPrice>
            <DownArrow width="9" height="15" viewBox="0 0 9 15" fill={DOWN} aria-hidden="true">
              <path d="M2 0h5v8h2l-4.500 7L0 8h2z" />
            </DownArrow>
            <span>-1.66 -0.08%</span>
            <Session>交易中 12/18 21:41(美东)</Session>
          </PriceLine>
          <Badges>
            <Badge $bg="#6c7bd0" aria-label="环球"><Globe size={12} strokeWidth={1.5} /></Badge>
            <Badge $bg="#6ba2ee" aria-label="标签"><Tag size={10} fill="#fff" stroke="#fff" /></Badge>
            <Badge $bg="#fff" $fg="#5b7da0" $line="#b9c6d3" aria-label="笔记">
              <svg width="10" height="12" viewBox="0 0 10 12" aria-hidden="true">
                <path fill="currentColor" d="M0 0h10v12L7 10H3l-3 2z" />
                <path stroke="#fff" d="M2 3.500h6M2 6.500h6" />
              </svg>
            </Badge>
            <Badge $bg="#ea5068" aria-label="自选"><Heart size={12} fill="#fff" stroke="#fff" /></Badge>
          </Badges>
          <AlarmButton $bg="#cdd1d6" $fg="#4b545f" aria-label="提醒"><Bell size={12} fill="currentColor" /></AlarmButton>
          <Stats>
            {stats.map(([label, value, tone]) => (
              <Stat key={label}>
                <StatLabel>{label}</StatLabel>
                <StatValue $tone={tone}>{value}</StatValue>
              </Stat>
            ))}
          </Stats>
          <Collapse aria-label="收起">
            <Icon w={9} h={5}><path strokeWidth="1.500" d="M.5 4.500l4-4 4 4" /></Icon>
          </Collapse>
          <Inverse>
            <InverseName>USDXAU 美元/黄金</InverseName>
            <span>0.0004937</span>
            <span>+0.0000004</span>
            <span>+0.08%</span>
          </Inverse>
        </Quote>
        <GroupTitle>重要汇率</GroupTitle>
        <Table>
          <colgroup>
            <col width="70" />
            <col width="110" />
            <col width="89" />
            <col width="67" />
          </colgroup>
          <thead>
            <tr>
              <Th>代码</Th>
              <Th>名称</Th>
              <Th $end>最新价</Th>
              <Th>
                <SortButton>涨跌幅 <Chevron /></SortButton>
              </Th>
            </tr>
          </thead>
          <tbody>
            {quotes.map(([code, name, price, change, link, box], i) => {
              const down = change.startsWith("-");
              return (
                <Row key={code} $active={i === 0}>
                  <Td><Clip>{code}</Clip></Td>
                  <NameTd>
                    <Clip $link={link} $w={i === 0 ? 99 : 94}>
                      {name}
                      {i === 0 && (
                        <Icon w={13} h={13}>
                          <circle cx="6.500" cy="6.500" r="6" stroke="#8fa9c6" />
                          <circle cx="6.500" cy="6.500" r="2" fill="#6c8fb8" stroke="none" />
                        </Icon>
                      )}
                    </Clip>
                  </NameTd>
                  <ValueTd $down={down} $boxed={box !== "none"}>{price}</ValueTd>
                  <ValueTd $down={down} $boxed={box === "both"}>{change}</ValueTd>
                </Row>
              );
            })}
            {Array.from({ length: 12 }, (_, i) => (
              <Row key={i}>
                <Td /><Td /><Td /><Td />
              </Row>
            ))}
          </tbody>
        </Table>
      </Sidebar>
    </Page>
  );
}
